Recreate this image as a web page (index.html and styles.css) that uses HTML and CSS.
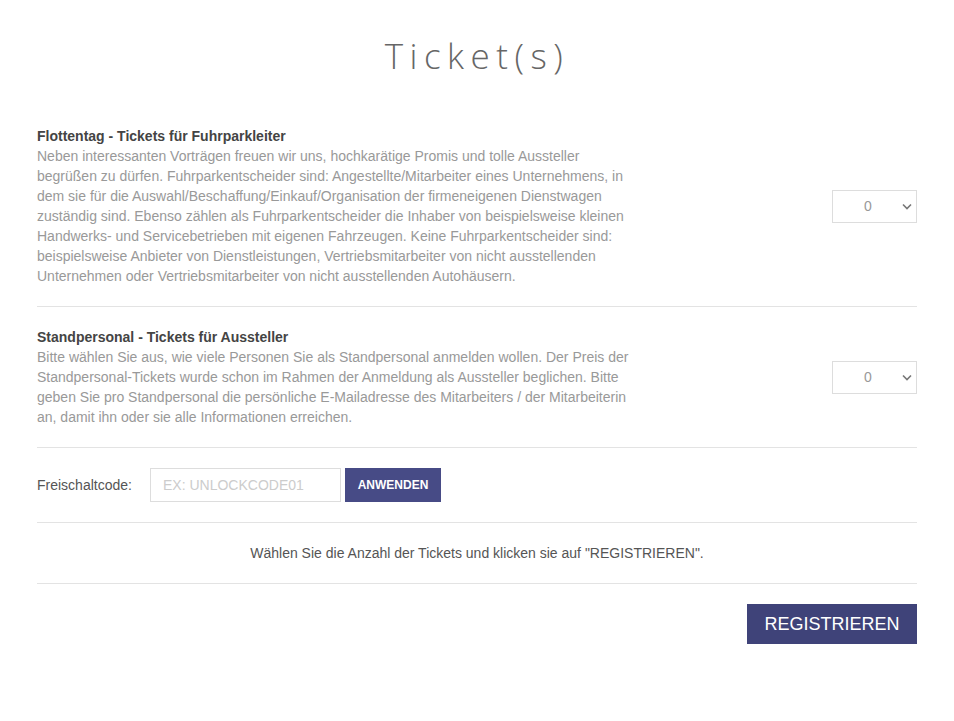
FILE: index.html
```html
<!DOCTYPE html>
<html lang="de">
<head>
<meta charset="utf-8">
<title>Ticket(s)</title>
<link rel="stylesheet" href="styles.css">
</head>
<body>
<div class="page">
  <h1 class="title">Ticket(s)</h1>
  <div class="ticket first">
    <div class="info">
      <div class="name">Flottentag - Tickets für Fuhrparkleiter</div>
      <div class="desc">Neben interessanten Vorträgen freuen wir uns, hochkarätige Promis und tolle Aussteller begrüßen zu dürfen. Fuhrparkentscheider sind: Angestellte/Mitarbeiter eines Unternehmens, in dem sie für die Auswahl/Beschaffung/Einkauf/Organisation der firmeneigenen Dienstwagen zuständig sind. Ebenso zählen als Fuhrparkentscheider die Inhaber von beispielsweise kleinen Handwerks- und Servicebetrieben mit eigenen Fahrzeugen. Keine Fuhrparkentscheider sind: beispielsweise Anbieter von Dienstleistungen, Vertriebsmitarbeiter von nicht ausstellenden Unternehmen oder Vertriebsmitarbeiter von nicht ausstellenden Autohäusern.</div>
    </div>
    <div class="qty">
      <div class="select"><span class="val">0</span><svg class="chev" width="10" height="7" viewBox="0 0 10 7"><path d="M1 1.5 L5 5.5 L9 1.5" fill="none" stroke="#777" stroke-width="1.6"/></svg></div>
    </div>
  </div>
  <div class="ticket">
    <div class="info">
      <div class="name">Standpersonal - Tickets für Aussteller</div>
      <div class="desc">Bitte wählen Sie aus, wie viele Personen Sie als Standpersonal anmelden wollen. Der Preis der Standpersonal-Tickets wurde schon im Rahmen der Anmeldung als Aussteller beglichen. Bitte geben Sie pro Standpersonal die persönliche E-Mailadresse des Mitarbeiters / der Mitarbeiterin an, damit ihn oder sie alle Informationen erreichen.</div>
    </div>
    <div class="qty">
      <div class="select"><span class="val">0</span><svg class="chev" width="10" height="7" viewBox="0 0 10 7"><path d="M1 1.5 L5 5.5 L9 1.5" fill="none" stroke="#777" stroke-width="1.6"/></svg></div>
    </div>
  </div>
  <div class="code-row">
    <span class="code-label">Freischaltcode:</span>
    <div class="code-input">EX: UNLOCKCODE01</div>
    <button class="apply">ANWENDEN</button>
  </div>
  <div class="hint">Wählen Sie die Anzahl der Tickets und klicken sie auf "REGISTRIEREN".</div>
  <div class="actions">
    <button class="register">REGISTRIEREN</button>
  </div>
</div>
</body>
</html>
```

FILE: styles.css
```css
* { box-sizing: border-box; }
body {
  margin: 0;
  background: #fff;
  font-family: "Liberation Sans", Arial, sans-serif;
  font-size: 14px;
  color: #555;
}
.page {
  width: 880px;
  margin: 0 auto;
  padding-top: 32px;
}
.title {
  margin: 0 0 46px;
  text-align: center;
  font-family: "Open Sans", sans-serif;
  font-weight: 300;
  font-size: 35px;
  line-height: 48px;
  letter-spacing: 6.5px;
  color: #666;
}
.ticket {
  display: flex;
  align-items: center;
  justify-content: space-between;
  padding: 20px 0;
  border-bottom: 1px solid #e3e3e3;
}
.ticket.first { padding-top: 0; }
.info { width: 596px; line-height: 20px; }
.name { font-weight: bold; color: #444; }
.desc { color: #999; }
.select {
  width: 85px;
  height: 33px;
  border: 1px solid #ddd;
  display: flex;
  align-items: center;
  padding: 0 4px 0 31px;
  color: #999;
}
.val { flex: 1; }
.code-row {
  display: flex;
  align-items: center;
  padding: 20px 0;
  border-bottom: 1px solid #e3e3e3;
}
.code-label { color: #555; width: 113px; }
.code-input {
  width: 191px;
  height: 34px;
  border: 1px solid #ddd;
  color: #ccc;
  line-height: 32px;
  padding-left: 12px;
  margin-right: 4px;
}
.apply {
  height: 34px;
  width: 96px;
  border: 0;
  background: #474b86;
  color: #fff;
  font-family: "Liberation Sans", Arial, sans-serif;
  font-size: 12px;
  font-weight: bold;
  padding: 0;
}
.hint {
  text-align: center;
  padding: 20px 0;
  line-height: 20px;
  border-bottom: 1px solid #e3e3e3;
}
.actions {
  display: flex;
  justify-content: flex-end;
  padding-top: 20px;
}
.register {
  width: 170px;
  height: 40px;
  border: 0;
  background: #3f4379;
  color: #fff;
  font-family: "Liberation Sans", Arial, sans-serif;
  font-size: 18px;
  padding: 0;
}
```
